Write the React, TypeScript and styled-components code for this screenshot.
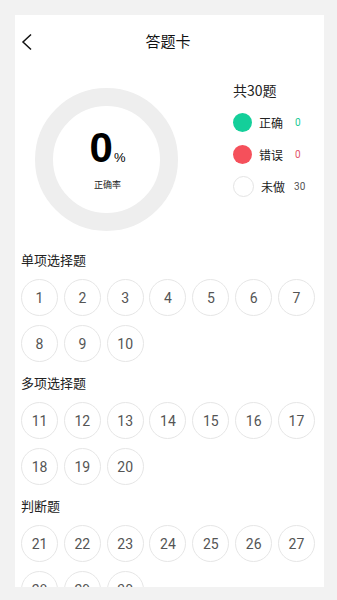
import React from 'react'
import styled, { createGlobalStyle } from 'styled-components'

const GlobalStyle = createGlobalStyle`
  html, body {
    margin: 0;
    padding: 0;
    background-color: #f2f2f2;
    font-family: "Noto Sans CJK SC", "Noto Sans", sans-serif;
  }
  * {
    box-sizing: border-box;
  }
`

interface ISection {
  title: string
  from: number
  to: number
}

const sections: ISection[] = [
  { title: '单项选择题', from: 1, to: 10 },
  { title: '多项选择题', from: 11, to: 20 },
  { title: '判断题', from: 21, to: 30 },
]

const legend = [
  { label: '正确', count: 0, kind: 'right' as const },
  { label: '错误', count: 0, kind: 'wrong' as const },
  { label: '未做', count: 30, kind: 'todo' as const },
]

function range(from: number, to: number) {
  const list: number[] = []
  for (let i = from; i <= to; i++) list.push(i)
  return list
}

function App() {
  return (
    <Page>
      <GlobalStyle />
      <Card>
        <Header>
          <BackButton aria-label='back'>
            <svg width='12' height='18' viewBox='0 0 12 18'>
              <path d='M10 1.5 L2 9 L10 16.5' fill='none' stroke='#111' strokeWidth='1.5' />
            </svg>
          </BackButton>
          <Title>答题卡</Title>
          <span />
        </Header>

        <Summary>
          <Ring>
            <Rate>
              0<Percent>%</Percent>
            </Rate>
            <RateLabel>正确率</RateLabel>
          </Ring>
          <Legend>
            <Total>共30题</Total>
            {legend.map(item => (
              <LegendRow key={item.label}>
                <Dot $kind={item.kind} />
                <LegendLabel>{item.label}</LegendLabel>
                <LegendCount $kind={item.kind}>{item.count}</LegendCount>
              </LegendRow>
            ))}
          </Legend>
        </Summary>

        {sections.map(section => (
          <Section key={section.title}>
            <SectionTitle>{section.title}</SectionTitle>
            <NumberGrid>
              {range(section.from, section.to).map(n => (
                <NumberItem key={n}>{n}</NumberItem>
              ))}
            </NumberGrid>
          </Section>
        ))}
      </Card>
    </Page>
  )
}

export default App

type Kind = 'right' | 'wrong' | 'todo'

const dotColors: Record<Kind, string> = {
  right: '#14cf9a',
  wrong: '#f5505b',
  todo: '#ffffff',
}

const countColors: Record<Kind, string> = {
  right: '#18c996',
  wrong: '#e2526a',
  todo: '#555555',
}

const Page = styled.div`
  height: 600px;
  padding: 15px 13px 13px 15px;
  overflow: hidden;
`

const Card = styled.div`
  background-color: #ffffff;
  height: 572px;
  overflow: hidden;
  padding: 0 9px 0 6px;
`

const Header = styled.div`
  align-items: center;
  display: grid;
  grid-template-columns: 1fr auto 1fr;
  height: 52px;
`

const BackButton = styled.div`
  align-items: center;
  display: flex;
  margin-top: 1px;
`

const Title = styled.div`
  color: #111111;
  font-size: 15px;
  line-height: 20px;
`

const Summary = styled.div`
  align-items: flex-start;
  display: flex;
  padding: 13px 0 8px;
`

const Ring = styled.div`
  align-items: center;
  border: 18px solid #eeeeee;
  border-radius: 50%;
  display: flex;
  flex-direction: column;
  height: 143px;
  margin: 8px 0 0 14px;
  padding-top: 21px;
  width: 143px;
`

const Rate = styled.div`
  color: #000000;
  font-family: "Liberation Sans", Arial, sans-serif;
  font-size: 42px;
  font-weight: 700;
  line-height: 42px;
  padding-left: 2px;
`

const Percent = styled.span`
  font-size: 13px;
  font-weight: 400;
  margin-left: 1px;
`

const RateLabel = styled.div`
  color: #222222;
  font-size: 9px;
  line-height: 12px;
  padding-left: 2px;
`

const Legend = styled.div`
  display: flex;
  flex-direction: column;
  margin-left: 55px;
`

const Total = styled.div`
  color: #222222;
  font-size: 14px;
  line-height: 20px;
  margin-bottom: 6px;
`

const LegendRow = styled.div`
  align-items: center;
  display: flex;
  height: 32px;
`

const Dot = styled.div<{ $kind: Kind }>`
  background-color: ${p => dotColors[p.$kind]};
  border: ${p => (p.$kind === 'todo' ? '1px solid #e4e4e4' : 'none')};
  border-radius: 50%;
  flex-shrink: 0;
  height: ${p => (p.$kind === 'todo' ? '21px' : '19px')};
  width: ${p => (p.$kind === 'todo' ? '21px' : '19px')};
`

const LegendLabel = styled.span`
  color: #222222;
  font-size: 12px;
  margin-left: 7px;
`

const LegendCount = styled.span<{ $kind: Kind }>`
  color: ${p => countColors[p.$kind]};
  font-family: Roboto, "Noto Sans", sans-serif;
  font-size: 10px;
  margin-left: ${p => (p.$kind === 'todo' ? '9px' : '12px')};
`

const Section = styled.div`
  padding-top: 11px;
`

const SectionTitle = styled.div`
  color: #222222;
  font-size: 13px;
  line-height: 20px;
`

const NumberGrid = styled.div`
  display: grid;
  grid-template-columns: repeat(7, 37px);
  justify-content: space-between;
  margin-top: 9px;
  row-gap: 9px;
`

const NumberItem = styled.div`
  align-items: center;
  border: 1px solid #e6e6e6;
  border-radius: 50%;
  color: #555555;
  display: flex;
  font-family: Roboto, "Noto Sans", sans-serif;
  font-size: 14px;
  height: 37px;
  justify-content: center;
  width: 37px;
`
